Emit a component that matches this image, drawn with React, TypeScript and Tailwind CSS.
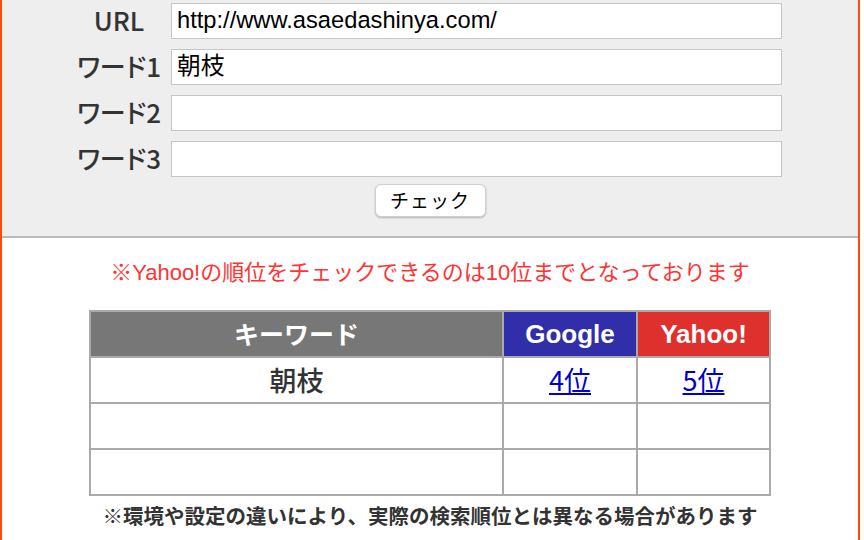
import React from "react";

const jp = { fontFamily: '"Noto Sans CJK JP", sans-serif' };
const lat = { fontFamily: '"Liberation Sans", "Noto Sans CJK JP", sans-serif' };

function Field({ label, value }: { label: string; value: string }) {
  return (
    <div className="flex items-center h-[36px]">
      <div
        className="w-[88px] ml-[73px] text-center text-[26px] font-medium text-[#333333] leading-none [font-feature-settings:'palt'] -mt-[3px]"
        style={jp}
      >
        {label}
      </div>
      <div className="ml-[8px] w-[611px] h-[36px] bg-white border border-[#c6c6c6] flex items-center px-[5px]">
        <span className="text-[23.7px] text-black leading-none whitespace-nowrap" style={lat}>
          {value}
        </span>
      </div>
    </div>
  );
}

export default function App() {
  const rows = [
    { k: "朝枝", g: "4位", y: "5位" },
    { k: "", g: "", y: "" },
    { k: "", g: "", y: "" },
  ];
  return (
    <div className="w-[864px] h-[540px] bg-white overflow-hidden">
      <div className="w-[860px] h-[540px] border-l-2 border-r-2 border-[#ff4a0a]">
        <div className="bg-[#eeeeee] h-[238px] border-b-2 border-[#bbbbbb] pt-[3px]">
          <div className="flex flex-col gap-[10px]">
            <Field label="URL" value="http://www.asaedashinya.com/" />
            <Field label="ワード1" value="朝枝" />
            <Field label="ワード2" value="" />
            <Field label="ワード3" value="" />
          </div>
          <div className="flex justify-center mt-[7px]">
            <button
              className="w-[111px] h-[33px] bg-white rounded-[6px] border border-[#cfcfcf] shadow-[0_1px_2px_rgba(0,0,0,0.25)] text-[19px] text-black flex items-center justify-center tracking-[1px]"
              style={jp}
            >
              チェック
            </button>
          </div>
        </div>
        <div className="pt-[19px] flex flex-col items-center">
          <div className="text-[22px] leading-[32px] text-[#ff3333]" style={lat}>
            ※Yahoo!の順位をチェックできるのは10位までとなっております
          </div>
          <div className="mt-[21px] grid grid-cols-[411px_132px_131px] gap-[2px] p-[2px] bg-[#aaaaaa] auto-rows-[44px]">
            <div className="bg-[#777777] flex items-center justify-center text-white text-[25px] font-bold" style={jp}>
              キーワード
            </div>
            <div className="bg-[#312ea9] flex items-center justify-center text-white text-[26px] font-bold" style={lat}>
              Google
            </div>
            <div className="bg-[#de302c] flex items-center justify-center text-white text-[26px] font-bold" style={lat}>
              Yahoo!
            </div>
            {rows.map((r, i) => (
              <React.Fragment key={i}>
                <div className="bg-white flex items-center justify-center text-[27px] text-[#333333] font-medium" style={jp}>
                  {r.k}
                </div>
                <div className="bg-white flex items-center justify-center text-[27px]" style={jp}>
                  {r.g && <a href="#" className="text-[#0000cc] underline">{r.g}</a>}
                </div>
                <div className="bg-white flex items-center justify-center text-[27px]" style={jp}>
                  {r.y && <a href="#" className="text-[#0000cc] underline">{r.y}</a>}
                </div>
              </React.Fragment>
            ))}
          </div>
          <div className="mt-[5px] text-[20.5px] leading-[28px] font-bold text-[#333333]" style={jp}>
            ※環境や設定の違いにより、実際の検索順位とは異なる場合があります
          </div>
        </div>
      </div>
    </div>
  );
}
